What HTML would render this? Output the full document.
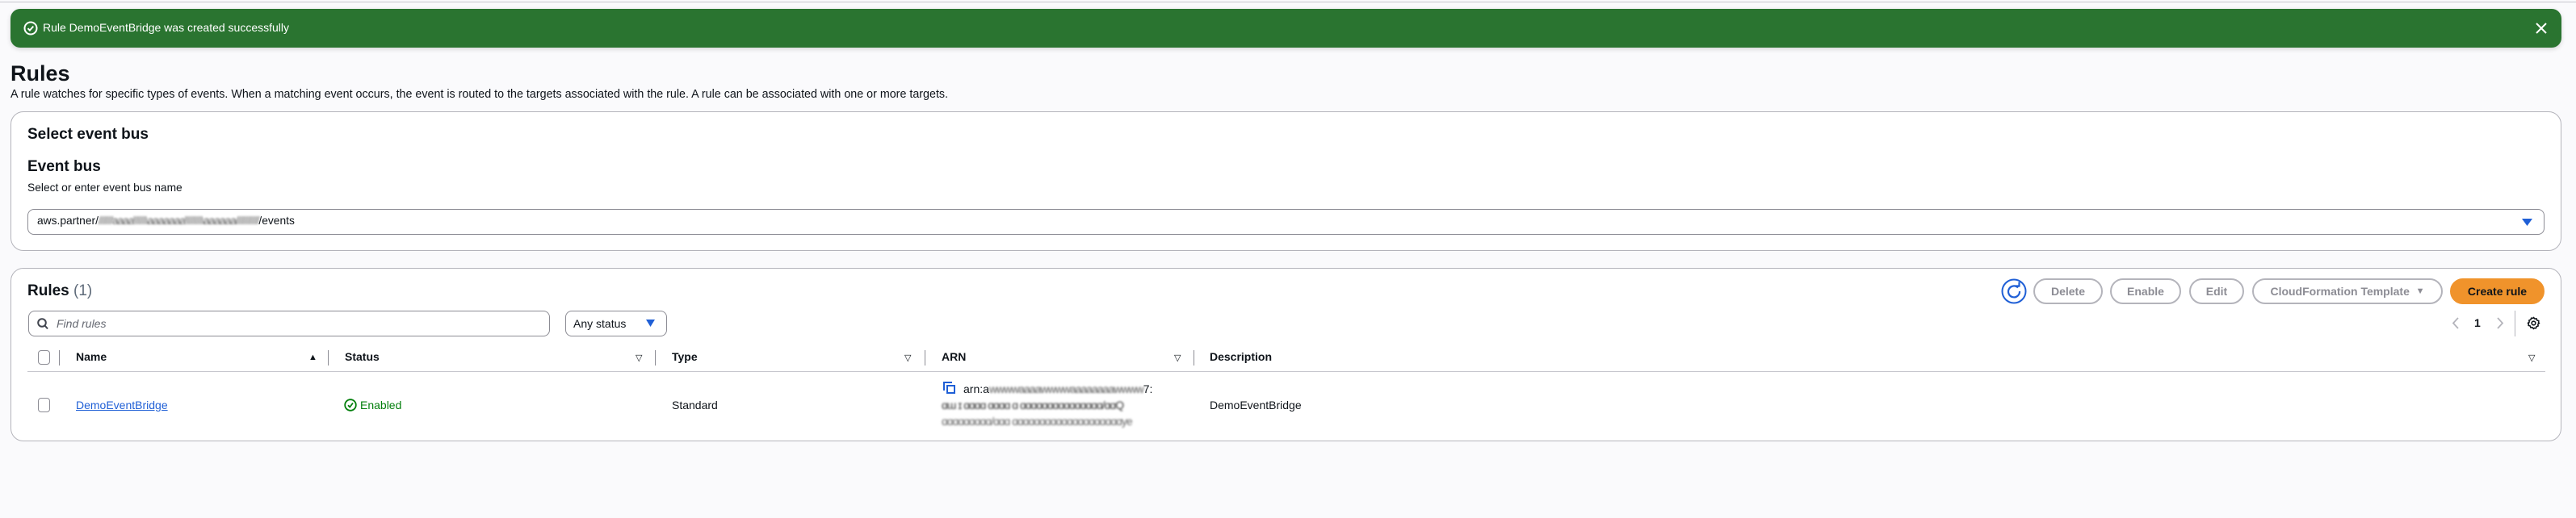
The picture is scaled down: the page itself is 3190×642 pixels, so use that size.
<!DOCTYPE html>
<html><head><meta charset="utf-8"><style>
*{box-sizing:border-box;margin:0;padding:0}
body{width:3190px;height:642px;background:#fafafc;font-family:"Liberation Sans",sans-serif;color:#0f141a;position:relative;overflow:hidden;font-size:14px}
.a{position:absolute;white-space:nowrap}
.topline{left:0;top:2px;width:3190px;height:1px;background:#c6c6cd}
.banner{left:13px;top:11px;width:3159px;height:48px;background:#2a7430;border-radius:12px;box-shadow:0 2px 6px rgba(0,0,0,.15)}
.panel{background:#fff;border:1px solid #b4b4bb;border-radius:16px;left:13px;width:3159px}
.btn{top:345px;height:32px;border:2px solid #b4b4bb;border-radius:16px;background:#fff;color:#8c8c94;font-weight:bold;font-size:14px;display:flex;align-items:center;justify-content:center}
.hd{top:434px;font-weight:bold;font-size:14px}
.div{top:434px;width:1px;height:19px;background:#8c8c94}
.sort{top:437px;font-size:11px}
.cb{width:15px;height:18px;border:1.5px solid #8c8c94;border-radius:4px;background:#fff}
.blur{filter:blur(1.2px);color:#555;letter-spacing:-1px}
.inp{border:1.5px solid #8c8c94;border-radius:8px;background:#fff}
</style></head><body>
<div class="a topline"></div>
<div class="a banner">
 <svg class="a" style="left:16px;top:15px" width="18" height="18" viewBox="0 0 18 18"><circle cx="9" cy="9" r="7.5" fill="none" stroke="#fff" stroke-width="2"/><path d="M5.5 9.2l2.4 2.4 4.4-5" fill="none" stroke="#fff" stroke-width="2"/></svg>
 <div class="a" style="left:40px;top:15px;color:#fff;font-size:14px">Rule DemoEventBridge was created successfully</div>
 <svg class="a" style="left:3127px;top:17px" width="14" height="14" viewBox="0 0 14 14"><path d="M1 1l12 12M13 1L1 13" stroke="#fff" stroke-width="2"/></svg>
</div>
<div class="a" style="left:13px;top:76px;font-size:27px;font-weight:bold">Rules</div>
<div class="a" style="left:13px;top:109px;font-size:14.3px">A rule watches for specific types of events. When a matching event occurs, the event is routed to the targets associated with the rule. A rule can be associated with one or more targets.</div>

<div class="a panel" style="top:138px;height:173px"></div>
<div class="a" style="left:34px;top:156px;font-size:19px;font-weight:bold">Select event bus</div>
<div class="a" style="left:34px;top:196px;font-size:19px;font-weight:bold">Event bus</div>
<div class="a" style="left:34px;top:225px;font-size:13.8px">Select or enter event bus name</div>
<div class="a inp" style="left:34px;top:259px;width:3117px;height:32px"></div>
<div class="a" style="left:46px;top:266px;font-size:13.8px">aws.partner/<span class="blur">//////aaaa\\\\\\aaaaaaa\\\\\\\\aaaaaa//////////</span>/events</div>
<svg class="a" style="left:3123px;top:271px" width="13" height="9"><path d="M0 0h13L6.5 9z" fill="#1f5fd6"/></svg>

<div class="a panel" style="top:332px;height:215px"></div>
<div class="a" style="left:34px;top:350px;font-size:19px;font-weight:bold">Rules <span style="font-weight:normal;color:#5f6b7a">(1)</span></div>
<div class="a inp" style="left:35px;top:385px;width:646px;height:32px"></div>
<svg class="a" style="left:46px;top:394px" width="14" height="15" viewBox="0 0 14 15"><circle cx="6" cy="6" r="4.8" fill="none" stroke="#424650" stroke-width="2"/><path d="M9.5 9.5l3.5 4" stroke="#424650" stroke-width="2"/></svg>
<div class="a" style="left:70px;top:393px;font-style:italic;color:#656871;font-size:14px">Find rules</div>
<div class="a inp" style="left:700px;top:385px;width:126px;height:32px"></div>
<div class="a" style="left:710px;top:393px;font-size:14px">Any status</div>
<svg class="a" style="left:800px;top:396px" width="11" height="9"><path d="M0 0h11L5.5 9z" fill="#1f5fd6"/></svg>

<svg class="a" style="left:2478px;top:345px" width="32" height="32" viewBox="0 0 32 32"><circle cx="16" cy="16" r="14.5" fill="#fff" stroke="#1f5fd6" stroke-width="2"/><path d="M21 11.5A7 7 0 1 0 23 16" fill="none" stroke="#1f5fd6" stroke-width="2.2"/><path d="M17.5 9.5h5v-5" fill="none" stroke="#1f5fd6" stroke-width="2.2"/></svg>
<div class="a btn" style="left:2518px;width:86px">Delete</div>
<div class="a btn" style="left:2613px;width:88px">Enable</div>
<div class="a btn" style="left:2711px;width:68px">Edit</div>
<div class="a btn" style="left:2789px;width:236px">CloudFormation Template&nbsp;&nbsp;<span style="font-size:11px">▼</span></div>
<div class="a btn" style="left:3034px;width:117px;background:#f0932b;border-color:#f0932b;color:#0f141a">Create rule</div>

<svg class="a" style="left:3036px;top:393px" width="10" height="15"><path d="M8 1L2 7.5 8 14" fill="none" stroke="#b4b4bb" stroke-width="1.8"/></svg>
<div class="a" style="left:3064px;top:392px;font-weight:bold;font-size:14px">1</div>
<svg class="a" style="left:3091px;top:393px" width="10" height="15"><path d="M2 1l6 6.5L2 14" fill="none" stroke="#b4b4bb" stroke-width="1.8"/></svg>
<div class="a" style="left:3114px;top:385px;width:1px;height:32px;background:#b4b4bb"></div>
<svg class="a" style="left:3129px;top:392px" width="17" height="17" viewBox="0 0 24 24"><path d="M12 2l2 2.5 3-.5 1 3 3 1-.5 3L22 12l-2.5 2 .5 3-3 1-1 3-3-.5L12 22l-2-2.5-3 .5-1-3-3-1 .5-3L2 12l2.5-2-.5-3 3-1 1-3 3 .5z" fill="none" stroke="#0f141a" stroke-width="2.2" stroke-linejoin="round"/><circle cx="12" cy="12" r="3.3" fill="none" stroke="#0f141a" stroke-width="2.2"/></svg>

<div class="a cb" style="left:47px;top:434px"></div>
<div class="a div" style="left:73px"></div>
<div class="a hd" style="left:94px">Name</div>
<div class="a sort" style="left:382px">▲</div>
<div class="a div" style="left:406px"></div>
<div class="a hd" style="left:427px">Status</div>
<div class="a sort" style="left:787px">▽</div>
<div class="a div" style="left:811px"></div>
<div class="a hd" style="left:832px">Type</div>
<div class="a sort" style="left:1120px">▽</div>
<div class="a div" style="left:1145px"></div>
<div class="a hd" style="left:1166px">ARN</div>
<div class="a sort" style="left:1454px">▽</div>
<div class="a div" style="left:1478px"></div>
<div class="a hd" style="left:1498px">Description</div>
<div class="a sort" style="left:3131px">▽</div>
<div class="a" style="left:34px;top:460px;width:3118px;height:1px;background:#c6c6cd"></div>

<div class="a cb" style="left:47px;top:493px"></div>
<div class="a" style="left:94px;top:494px;color:#1f5fd6;text-decoration:underline;font-size:14px">DemoEventBridge</div>
<svg class="a" style="left:426px;top:494px" width="16" height="16" viewBox="0 0 16 16"><circle cx="8" cy="8" r="6.8" fill="none" stroke="#037f0c" stroke-width="1.8"/><path d="M5 8.2l2.2 2.3L11 5.5" fill="none" stroke="#037f0c" stroke-width="1.8"/></svg>
<div class="a" style="left:446px;top:494px;color:#037f0c;font-size:14px">Enabled</div>
<div class="a" style="left:832px;top:494px;font-size:14px">Standard</div>
<svg class="a" style="left:1168px;top:473px" width="15" height="15" viewBox="0 0 15 15"><path d="M1 11V1h10" fill="none" stroke="#1f5fd6" stroke-width="2"/><rect x="5" y="5" width="9" height="9" fill="none" stroke="#1f5fd6" stroke-width="2"/></svg>
<div class="a" style="left:1193px;top:474px;font-size:14px">arn:a<span class="blur">wwwwaaaawwwwaaaaaaaawwww</span>7:</div>
<div class="a blur" style="left:1166px;top:494px;font-size:14px;color:#333">ɑɯ ɪ ɑɑɑɑ ɑɑɑɑ ɑ ɑɑɑɑɑɑɑɑɑɑɑɑɑɑɑ/ɑɑQ</div>
<div class="a blur" style="left:1166px;top:514px;font-size:14px;color:#666">ɑɑɑɑɑɑɑɑɑ/ɑɑɑ ɑɑɑɑɑɑɑɑɑɑɑɑɑɑɑɑɑɑɑɑye</div>
<div class="a" style="left:1498px;top:494px;font-size:14px">DemoEventBridge</div>
</body></html>
